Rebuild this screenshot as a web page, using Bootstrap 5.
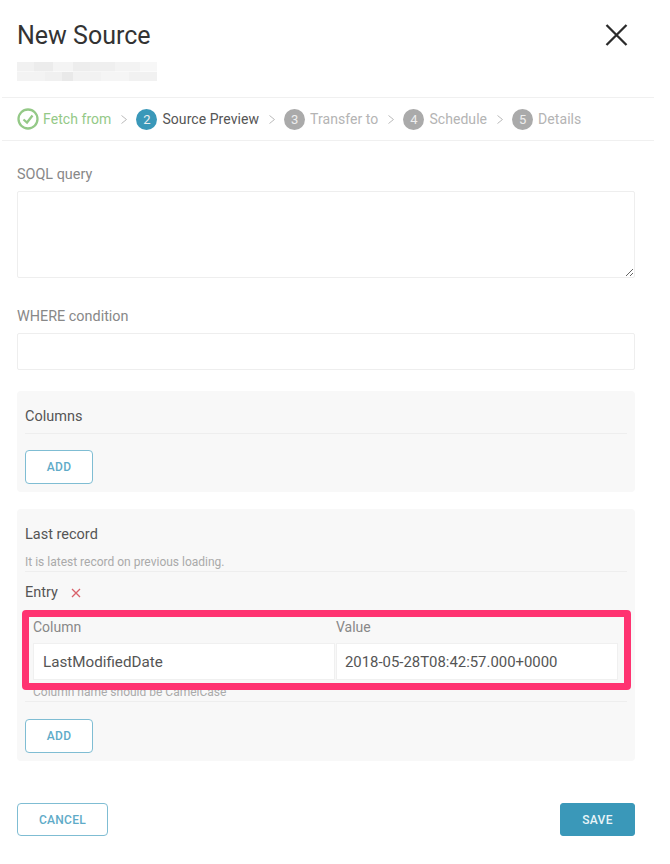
<!DOCTYPE html>
<html lang="en">
<head>
  <meta charset="UTF-8">
  <meta name="viewport" content="width=device-width, initial-scale=1.0">
  <title>New Source</title>
  <link href="https://cdn.jsdelivr.net/npm/bootstrap@5.3.0/dist/css/bootstrap.min.css" rel="stylesheet">
  <style>
    body {
      background: #fff;
      color: #555;
      font-family: Roboto, "Liberation Sans", sans-serif;
      font-size: 14px;
      width: 670px;
      height: 864px;
      overflow: hidden;
    }
    .page-head { height: 97px; padding: 19px 17px 0; position: relative; }
    .page-title { font-size: 25px; font-weight: 400; line-height: 34px; color: #333; margin: 0; }
    .blurred-name {
      width: 140px; height: 19px; margin-top: 9px;
      background:
        linear-gradient(90deg, #f1f1f1 0 12%, #ececec 12% 26%, #f4f4f4 26% 40%, #ededed 40% 52%, #efefef 52% 70%, #f3f3f3 70% 88%, #f7f7f7 88% 100%) top / 100% 50% no-repeat,
        linear-gradient(90deg, #f3f3f3 0 20%, #f0f0f0 20% 32%, #e9e9e9 32% 40%, #f2f2f2 40% 60%, #f5f5f5 60% 80%, #f1f1f1 80% 100%) bottom / 100% 50% no-repeat;
    }
    .close-x { position: absolute; left: 605px; top: 24px; }
    .step-bar {
      width: 652px; height: 44px; margin-left: 2px; padding-left: 15px;
      border-top: 1px solid #f0f0f0; border-bottom: 1px solid #f0f0f0;
      color: #b4b4b4; font-size: 14px; letter-spacing: .06px;
    }
    .step-dot {
      width: 21px; height: 21px; border-radius: 50%; background: #aaa; color: #eee;
      font-size: 13px; line-height: 21px; text-align: center; margin-right: 5px; flex: none;
    }
    .step-dot.is-active { background: #3a98b9; }
    .step-current { color: #555; }
    .step-done { color: #94c987; }
    .step-done svg { margin-right: 4px; }
    .step-sep { margin: 0 9px 0 10px; flex: none; }
    .form-body { width: 618px; margin-left: 17px; }
    .field-label { color: #888; font-size: 14.4px; line-height: 20px; margin: 0 0 6px; padding-top: 1px; display: block; }
    .label-soql { margin-top: 23px; }
    .label-where { margin-top: 28px; }
    .box-input {
      border: 1px solid #eee; border-radius: 2px; box-shadow: none; color: #555; background: #fff;
    }
    .soql-box { height: 87px; min-height: 0; resize: vertical; }
    .where-box { height: 37px; min-height: 0; }
    .grey-panel { background: #f8f8f8; border-radius: 4px; padding: 16px 8px 0; }
    .panel-columns { height: 101px; margin-top: 21px; }
    .panel-record { height: 252px; margin-top: 17px; position: relative; }
    .panel-title { color: #555; font-size: 14.5px; line-height: 20px; font-weight: 400; margin: 0; }
    .panel-rule { border-bottom: 1px solid #eee; }
    .title-ruled { padding-bottom: 6px; }
    .panel-hint { color: #aaa; font-size: 12px; line-height: 14px; }
    .hint-top { padding: 10px 0 2px; }
    .hint-bottom { padding: 5px 0 2px 8px; }
    .entry-head { height: 20px; margin-top: 11px; font-size: 14.5px; }
    .entry-head svg { margin-left: 13px; }
    .entry-cols { margin: 14px 0 0 8px; }
    .entry-key { width: 302px; margin-right: 1px; }
    .entry-value { width: 282px; }
    .col-label { color: #888; font-size: 14px; line-height: 20px; }
    .entry-input {
      height: 37px; margin-top: 6px; padding: 1px 9px 0; border: 1px solid #f0f0f0; background: #fff;
      font-size: 15.2px; color: #555;
    }
    .entry-value .entry-input { padding-left: 8px; font-size: 14.9px; }
    .btn-outline-teal {
      width: 68px; height: 34px; padding: 0; border: 1px solid #7fbdd3; border-radius: 4px;
      background: #fff; color: #5fabc8; font-size: 12px; font-weight: 500; letter-spacing: .3px;
    }
    .btn-teal {
      width: 75px; height: 33px; padding: 0; border: 1px solid #3a98b9; border-radius: 3px;
      background: #3a98b9; color: #e8f4f8; font-size: 12px; font-weight: 500; letter-spacing: .3px;
    }
    .btn-cancel { width: 91px; height: 33px; }
    .add-columns { margin-top: 16px; }
    .add-record { margin-top: 17px; }
    .form-foot { margin-top: 42px; }
    .highlight-box {
      position: absolute; left: 5px; top: 101px; width: 609px; height: 80px;
      border: 7px solid #ff3371; border-radius: 4px; pointer-events: none;
    }
  </style>
</head>
<body>

<div class="page-head">
  <h1 class="page-title">New Source</h1>
  <div class="blurred-name"></div>
  <svg class="close-x" width="23" height="22" viewBox="0 0 23 22" fill="none" stroke="#2b2b2b" stroke-width="2.3">
    <path d="M1.5 1 L21.5 21 M21.5 1 L1.5 21"/>
  </svg>
</div>

<div class="step-bar d-flex align-items-center">
  <span class="step-done d-flex align-items-center">
    <svg width="22" height="22" viewBox="0 0 22 22" fill="none" stroke="#94c987" stroke-width="2.3">
      <circle cx="11" cy="11" r="9.5"/>
      <path d="M6.5 11.5 L10 14.5 L15.5 7.5"/>
    </svg>Fetch from</span>
  <svg class="step-sep" width="6" height="9" viewBox="0 0 6 9" fill="none" stroke="#bbb" stroke-width="1"><path d="M.5 .5 L5.5 4.5 L.5 8.5"/></svg>
  <span class="step-dot is-active">2</span><span class="step-current">Source Preview</span>
  <svg class="step-sep" width="6" height="9" viewBox="0 0 6 9" fill="none" stroke="#bbb" stroke-width="1"><path d="M.5 .5 L5.5 4.5 L.5 8.5"/></svg>
  <span class="step-dot">3</span><span>Transfer to</span>
  <svg class="step-sep" width="6" height="9" viewBox="0 0 6 9" fill="none" stroke="#bbb" stroke-width="1"><path d="M.5 .5 L5.5 4.5 L.5 8.5"/></svg>
  <span class="step-dot">4</span><span>Schedule</span>
  <svg class="step-sep" width="6" height="9" viewBox="0 0 6 9" fill="none" stroke="#bbb" stroke-width="1"><path d="M.5 .5 L5.5 4.5 L.5 8.5"/></svg>
  <span class="step-dot">5</span><span>Details</span>
</div>

<form class="form-body">
  <label class="field-label label-soql">SOQL query</label>
  <textarea class="form-control box-input soql-box"></textarea>

  <label class="field-label label-where">WHERE condition</label>
  <input type="text" class="form-control box-input where-box">

  <div class="grey-panel panel-columns">
    <h2 class="panel-title panel-rule title-ruled">Columns</h2>
    <button type="button" class="btn btn-outline-teal add-columns">ADD</button>
  </div>

  <div class="grey-panel panel-record">
    <h2 class="panel-title">Last record</h2>
    <div class="panel-hint panel-rule hint-top">It is latest record on previous loading.</div>
    <div class="entry-head d-flex align-items-center">
      <span>Entry</span>
      <svg width="10" height="10" viewBox="0 0 10 10" fill="none" stroke="#d9616a" stroke-width="1.3">
        <path d="M1 1 L9 9 M9 1 L1 9"/>
      </svg>
    </div>
    <div class="entry-cols d-flex">
      <div class="entry-key">
        <div class="col-label">Column</div>
        <div class="entry-input d-flex align-items-center">LastModifiedDate</div>
      </div>
      <div class="entry-value">
        <div class="col-label">Value</div>
        <div class="entry-input d-flex align-items-center">2018-05-28T08:42:57.000+0000</div>
      </div>
    </div>
    <div class="panel-hint panel-rule hint-bottom">Column name should be CamelCase</div>
    <button type="button" class="btn btn-outline-teal add-record">ADD</button>
    <div class="highlight-box"></div>
  </div>

  <div class="form-foot d-flex justify-content-between">
    <button type="button" class="btn btn-outline-teal btn-cancel">CANCEL</button>
    <button type="button" class="btn btn-teal">SAVE</button>
  </div>
</form>

<script src="https://cdn.jsdelivr.net/npm/bootstrap@5.3.0/dist/js/bootstrap.bundle.min.js"></script>
</body>
</html>
